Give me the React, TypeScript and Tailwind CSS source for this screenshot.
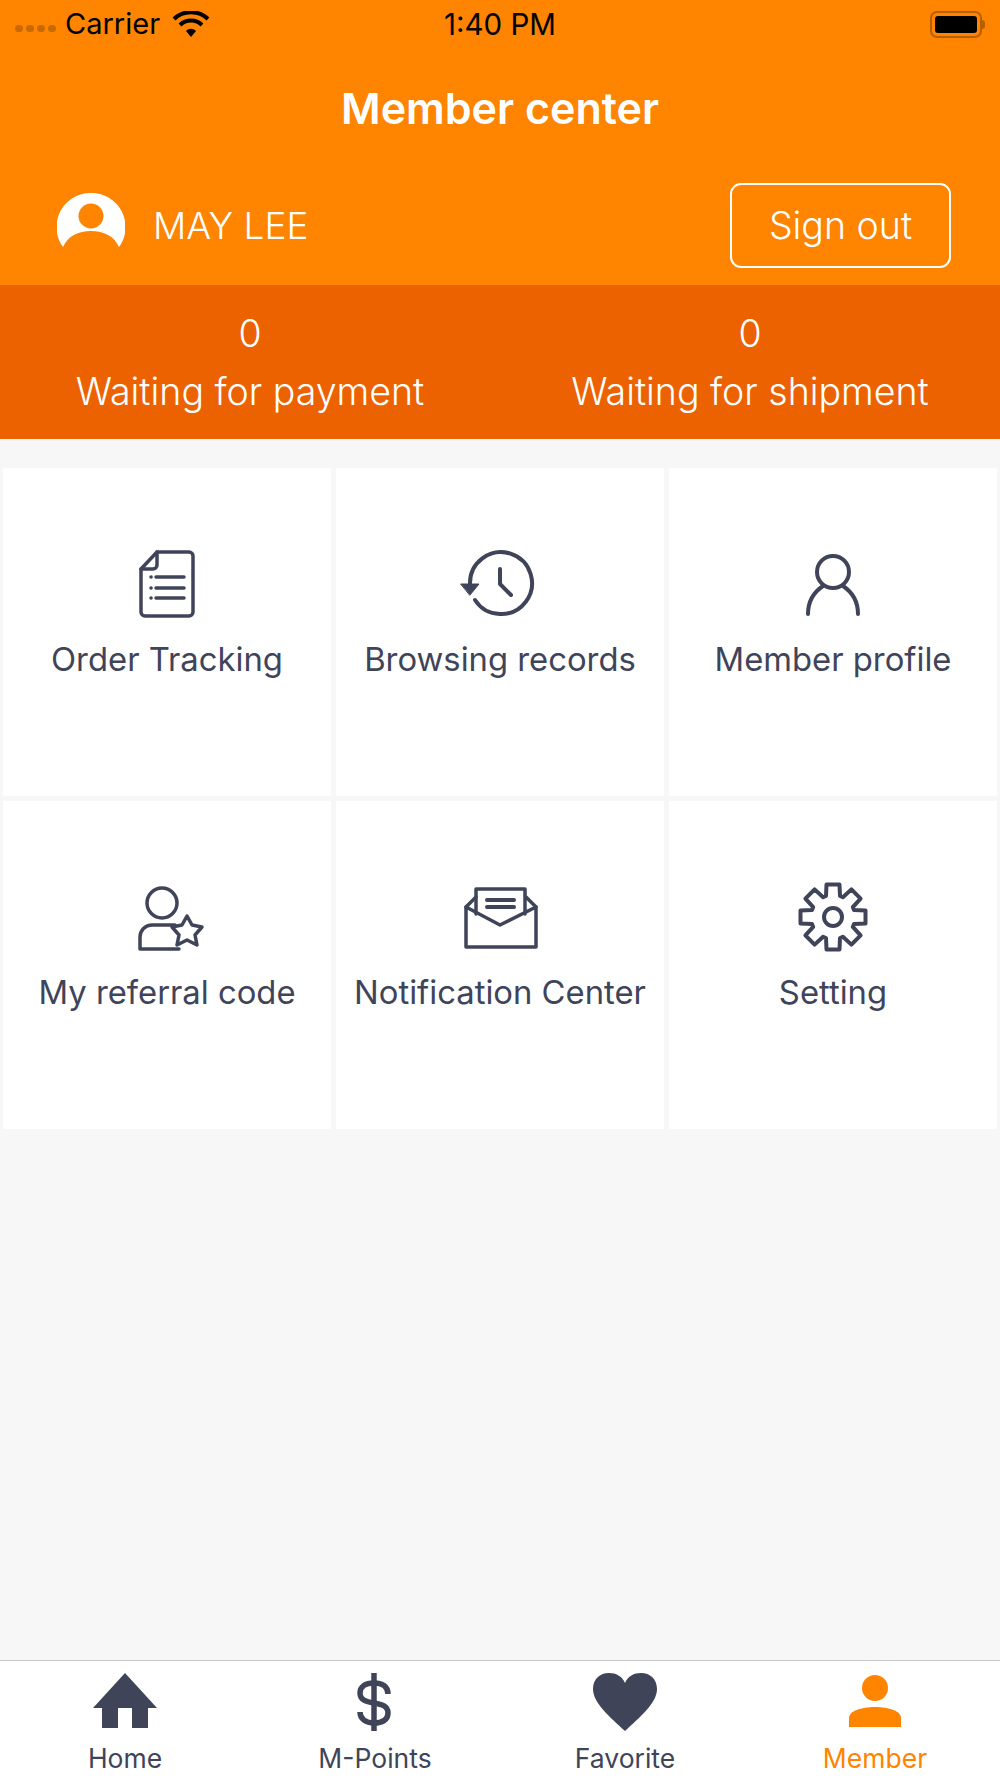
const ink = '#3f4459'

function gearPath() {
  const pts: string[] = []
  for (let i = 0; i < 8; i++) {
    const a = (i * Math.PI) / 4
    const local = [[-7, -21], [-6.5, -32.5], [6.5, -32.5], [7, -21]]
    for (const [x, y] of local) {
      const px = 43 + x * Math.cos(a) - y * Math.sin(a)
      const py = 42 + x * Math.sin(a) + y * Math.cos(a)
      pts.push(`${px.toFixed(1)} ${py.toFixed(1)}`)
    }
  }
  return 'M' + pts.join('L') + 'Z'
}

function DocIcon() {
  return (
    <svg width="100" height="90" viewBox="-3 0 100 90" fill="none" stroke={ink} strokeWidth="3.5" strokeLinecap="round" strokeLinejoin="round">
      <path d="M37 12H69a4 4 0 0 1 4 4V72a4 4 0 0 1-4 4H25a4 4 0 0 1-4-4V29Z" />
      <path d="M37 12V25a4 4 0 0 1-4 4H21" />
      <path d="M36 37H64M36 48H64M36 58H64" />
      <path d="M31 37h.1M31 48h.1M31 58h.1" />
    </svg>
  )
}

function ClockIcon() {
  return (
    <svg width="100" height="90" viewBox="0 0 100 90" fill="none" stroke={ink} strokeWidth="4" strokeLinecap="round" strokeLinejoin="round">
      <path d="M20 44A31 31 0 1 1 25 60" />
      <path d="M11 44H29L20 55Z" fill={ink} strokeWidth="1" />
      <path d="M50 29V44L61 55" />
    </svg>
  )
}

function PersonIcon() {
  return (
    <svg width="100" height="90" viewBox="0 0 100 90" fill="none" stroke={ink} strokeWidth="4" strokeLinecap="round" strokeLinejoin="round">
      <circle cx="50" cy="32" r="16" />
      <path d="M25 74C25 62 31 52 40 46M75 74C75 62 69 52 60 46" />
    </svg>
  )
}

function StarUserIcon() {
  return (
    <svg width="90" height="90" viewBox="-3 -2 90 90" fill="none" stroke={ink} strokeWidth="3.5" strokeLinecap="round" strokeLinejoin="round">
      <circle cx="37" cy="28" r="15" />
      <path d="M50 50H27A12 12 0 0 0 15 62V74H54" />
      <path d="M62 41L67 50L77 52L70 60L72 70L62 65L52 70L54 60L47 52L57 50Z" />
    </svg>
  )
}

function MailIcon() {
  return (
    <svg width="90" height="90" viewBox="0 -2 90 90" fill="none" stroke={ink} strokeWidth="3.5" strokeLinecap="round" strokeLinejoin="round">
      <path d="M11 32V72H81V32L45 50Z" />
      <path d="M21 22L11 32M71 22L81 32" />
      <path d="M21 39V14H70V39" />
      <path d="M32 25H59M32 32H59" strokeWidth="4" />
    </svg>
  )
}

function GearIcon() {
  return (
    <svg width="90" height="90" viewBox="-2 -2 90 90" fill="none" stroke={ink} strokeWidth="4" strokeLinecap="round" strokeLinejoin="round">
      <path d={gearPath()} />
      <circle cx="43" cy="42" r="9" />
    </svg>
  )
}

const cells = [
  { label: 'Order Tracking', icon: <DocIcon /> },
  { label: 'Browsing records', icon: <ClockIcon /> },
  { label: 'Member profile', icon: <PersonIcon /> },
  { label: 'My referral code', icon: <StarUserIcon /> },
  { label: 'Notification Center', icon: <MailIcon /> },
  { label: 'Setting', icon: <GearIcon /> },
]

export default function App() {
  return (
    <div className="w-[1000px] h-[1778px] flex flex-col bg-[#f7f7f7] font-['Inter',sans-serif] overflow-hidden">
      <header className="h-[285px] bg-[#ff8400] shrink-0 flex flex-col">
        {/* status bar */}
        <div className="h-[48px] grid grid-cols-3 items-center">
          <div className="flex items-center pl-[15px]">
            <div className="flex gap-[3px] mt-[8px]">
              <span className="w-[8px] h-[7px] rounded-full bg-[#c96a00]" />
              <span className="w-[8px] h-[7px] rounded-full bg-[#c96a00]" />
              <span className="w-[8px] h-[7px] rounded-full bg-[#c96a00]" />
              <span className="w-[8px] h-[7px] rounded-full bg-[#c96a00]" />
            </div>
            <span className="ml-[9px] text-[29px] leading-[32px] text-black">Carrier</span>
            <svg className="ml-[12px]" width="38" height="26" viewBox="0 0 38 26" fill="none" stroke="#000" strokeWidth="4">
              <path d="M2 8C11-1 27-1 36 8" />
              <path d="M8 14C14 8 24 8 30 14" />
              <path d="M14 20L19 26L24 20C21 17 17 17 14 20Z" fill="#000" strokeWidth="0" />
            </svg>
          </div>
          <div className="text-center text-[29.5px] leading-[32px] text-black">1:40 PM</div>
          <div className="flex justify-end items-center pr-[15px]">
            <div className="w-[52px] h-[27px] border-2 border-[#b85f00] rounded-[7px] p-[3px]">
              <div className="w-full h-full bg-black rounded-[3px]" />
            </div>
            <span className="w-[3px] h-[9px] bg-[#b85f00] rounded-r-full" />
          </div>
        </div>
        <h1 className="mt-[36px] h-[48px] text-center text-[43px] leading-[48px] font-semibold text-white">Member center</h1>
        <div className="mt-[51px] flex items-center justify-between pl-[57px] pr-[49px]">
          <div className="flex items-center">
            <svg className="mb-[6px]" width="68" height="60" viewBox="0 0 68 60">
              <path d="M34 0A34 34 0 0 1 62 54C57 43 47 38 34 38C21 38 11 43 6 54A34 34 0 0 1 34 0Z" fill="#fff" />
              <circle cx="34" cy="23" r="12.5" fill="#ff8400" />
            </svg>
            <span className="ml-[28px] text-[37px] leading-[44px] font-light text-white">MAY LEE</span>
          </div>
          <button className="w-[221px] h-[85px] pt-[2px] border-2 border-white rounded-[11px] text-[37.5px] font-light text-white">Sign out</button>
        </div>
      </header>

      <div className="h-[154px] bg-[#ec6200] shrink-0 grid grid-cols-2 text-white font-light text-center">
        <div className="pt-[26px]">
          <div className="text-[37.5px] leading-[46px]">0</div>
          <div className="mt-[12px] text-[37.5px] leading-[46px]">Waiting for payment</div>
        </div>
        <div className="pt-[26px]">
          <div className="text-[37.5px] leading-[46px]">0</div>
          <div className="mt-[12px] text-[37.5px] leading-[46px]">Waiting for shipment</div>
        </div>
      </div>

      <div className="flex-1 px-[3px] pt-[29px]">
        <div className="grid grid-cols-3 gap-[5px]">
          {cells.map((c) => (
            <div key={c.label} className="h-[328px] bg-white flex flex-col items-center pt-[72px]">
              <div className="h-[90px] flex justify-center">{c.icon}</div>
              <div className="mt-[9px] text-[32.8px] leading-[40px] text-[#3f4459] whitespace-nowrap">{c.label}</div>
            </div>
          ))}
        </div>
      </div>

      <nav className="h-[118px] shrink-0 bg-white border-t border-[#c8c8c8] grid grid-cols-4 text-[26.5px] leading-[30px] text-center text-[#3f4459]">
        <div className="flex flex-col items-center pt-[11px]">
          <svg width="66" height="60" viewBox="0 0 66 60" fill={ink}>
            <path d="M33 1L65 36H56V56H40V36H26V56H10V36H1Z" />
          </svg>
          <span className="mt-[11px]">Home</span>
        </div>
        <div className="flex flex-col items-center pt-[11px]">
          <svg className="-ml-[3px]" width="36" height="60" viewBox="0 0 36 60" fill="none" stroke={ink} strokeWidth="5.5">
            <path d="M32 22C32 14 26 11 18 11C9 11 4 15 4 21C4 36 32 26 32 41C32 48 26 51 18 51C10 51 4 47 4 40" />
            <path d="M18 1V59" />
          </svg>
          <span className="mt-[11px]">M-Points</span>
        </div>
        <div className="flex flex-col items-center pt-[11px]">
          <svg width="66" height="60" viewBox="0 0 66 60" fill={ink}>
            <path d="M33 59C18 45 1 31 1 17C1 7 8 1 17 1C24 1 30 4 33 11C36 4 42 1 49 1C58 1 65 7 65 17C65 31 48 45 33 59Z" />
          </svg>
          <span className="mt-[11px]">Favorite</span>
        </div>
        <div className="flex flex-col items-center pt-[11px] text-[#ff8400]">
          <svg width="66" height="60" viewBox="0 0 66 60" fill="#ff8400">
            <circle cx="33" cy="16" r="13" />
            <path d="M7 55V46C7 39 19 35 33 35C47 35 59 39 59 46V55Z" />
          </svg>
          <span className="mt-[11px]">Member</span>
        </div>
      </nav>
    </div>
  )
}
